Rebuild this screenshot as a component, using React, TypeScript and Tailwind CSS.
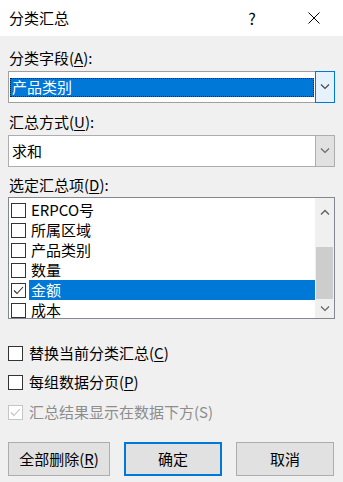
import React from "react";

const Chevron = ({ up = false, color = "#444" }: { up?: boolean; color?: string }) => (
  <svg width="10" height="6" viewBox="0 0 10 6" className="block">
    {up ? (
      <polyline points="1,5.5 5,1.5 9,5.5" fill="none" stroke={color} strokeWidth="1.3" />
    ) : (
      <polyline points="1,0.5 5,4.5 9,0.5" fill="none" stroke={color} strokeWidth="1.1" />
    )}
  </svg>
);

const Check = ({ color = "#333" }: { color?: string }) => (
  <svg width="13" height="13" viewBox="0 0 13 13" className="block">
    <polyline points="2,6.5 5,9.5 11,3" fill="none" stroke={color} strokeWidth="1.1" />
  </svg>
);

const Box = ({ checked = false, disabled = false }: { checked?: boolean; disabled?: boolean }) => (
  <div
    className={`w-[15px] h-[15px] shrink-0 border bg-white flex items-center justify-center ${
      disabled ? "border-[#c5c5c5] bg-[#f0f0f0]" : "border-[#333]"
    }`}
  >
    {checked && <Check color={disabled ? "#c0c0c0" : "#333"} />}
  </div>
);

const U = ({ c }: { c: string }) => <span className="underline underline-offset-2 decoration-1">{c}</span>;

export default function App() {
  const items = ["ERPCO号", "所属区域", "产品类别", "数量", "金额", "成本"];
  return (
    <div
      className="w-[343px] h-[482px] bg-[#f0f0f0] text-[15px] text-black overflow-hidden"
      style={{ fontFamily: '"Noto Sans CJK SC", "Noto Sans", sans-serif' }}
    >
      {/* title bar */}
      <div className="h-[36px] bg-white flex items-center pl-[9px] leading-[20px]">
        <span>分类汇总</span>
        <span className="ml-auto w-[16px] text-center mr-[48px] text-[16px]">?</span>
        <svg width="12" height="12" viewBox="0 0 12 12" className="mr-[23px]">
          <line x1="0.5" y1="0.5" x2="11.5" y2="11.5" stroke="#000" strokeWidth="1" />
          <line x1="11.5" y1="0.5" x2="0.5" y2="11.5" stroke="#000" strokeWidth="1" />
        </svg>
      </div>

      <div className="px-[8px] flex flex-col leading-[20px]">
        <div className="mt-[12px] pl-[1px] h-[20px]">
          分类字段(<U c="A" />):
        </div>
        {/* combo 1 */}
        <div className="mt-[3px] h-[32px] border border-[#a0a0a0] bg-white flex">
          <div className="flex-1 flex items-center pl-[1px] pr-[1px]">
            <div className="w-full h-[19px] bg-[#0078d7] text-white border border-dotted border-[#1a1a1a] flex items-center pl-[1px]">
              产品类别
            </div>
          </div>
          <div className="w-[20px] -my-px -mr-px border border-[#0078d7] bg-[#e5f1fb] flex items-center justify-center">
            <Chevron />
          </div>
        </div>

        <div className="mt-[9px] pl-[1px] h-[20px]">
          汇总方式(<U c="U" />):
        </div>
        {/* combo 2 */}
        <div className="mt-[3px] h-[32px] border border-[#adadad] bg-white flex">
          <div className="flex-1 flex items-center pl-[3px]">求和</div>
          <div className="w-[20px] -my-px -mr-px border border-[#adadad] bg-[#e1e1e1] flex items-center justify-center">
            <Chevron color="#666" />
          </div>
        </div>

        <div className="mt-[8px] pl-[1px] h-[20px]">
          选定汇总项(<U c="D" />):
        </div>
        {/* list box */}
        <div className="mt-[2px] h-[122px] border border-[#828790] bg-white flex">
          <div className="flex-1 pt-[2px] pl-[2px]">
            {items.map((it) => {
              const sel = it === "金额";
              return (
                <div key={it} className="h-[20px] flex items-center">
                  <Box checked={sel} />
                  <div
                    className={`ml-[3px] h-[20px] flex-1 flex items-center pl-[2px] ${
                      sel ? "bg-[#0078d7] text-white" : ""
                    }`}
                  >
                    {it}
                  </div>
                </div>
              );
            })}
          </div>
          <div className="w-[19px] bg-[#f0f0f0] flex flex-col items-center">
            <div className="h-[27px] flex items-center justify-center">
              <Chevron up color="#606060" />
            </div>
            <div className="h-[22px]" />
            <div className="w-[17px] h-[52px] bg-[#cdcdcd]" />
            <div className="flex-1 flex items-center justify-center">
              <Chevron color="#606060" />
            </div>
          </div>
        </div>

        {/* options */}
        <div className="mt-[24px] h-[20px] flex items-center">
          <Box />
          <span className="ml-[6px]">
            替换当前分类汇总(<U c="C" />)
          </span>
        </div>
        <div className="mt-[9px] h-[20px] flex items-center">
          <Box />
          <span className="ml-[6px]">
            每组数据分页(<U c="P" />)
          </span>
        </div>
        <div className="mt-[10px] h-[20px] flex items-center text-[#8d8d8d]">
          <Box checked disabled />
          <span className="ml-[6px]">汇总结果显示在数据下方(S)</span>
        </div>

        {/* buttons */}
        <div className="mt-[20px] flex items-center">
          <div className="w-[102px] h-[34px] border border-[#adadad] bg-[#e1e1e1] flex items-center justify-center">
            全部删除(<U c="R" />)
          </div>
          <div className="ml-[14px] w-[98px] h-[34px] border-2 border-[#0078d7] bg-[#e1e1e1] flex items-center justify-center">
            确定
          </div>
          <div className="ml-[14px] w-[98px] h-[34px] border border-[#adadad] bg-[#e1e1e1] flex items-center justify-center">
            取消
          </div>
        </div>
      </div>
    </div>
  );
}
